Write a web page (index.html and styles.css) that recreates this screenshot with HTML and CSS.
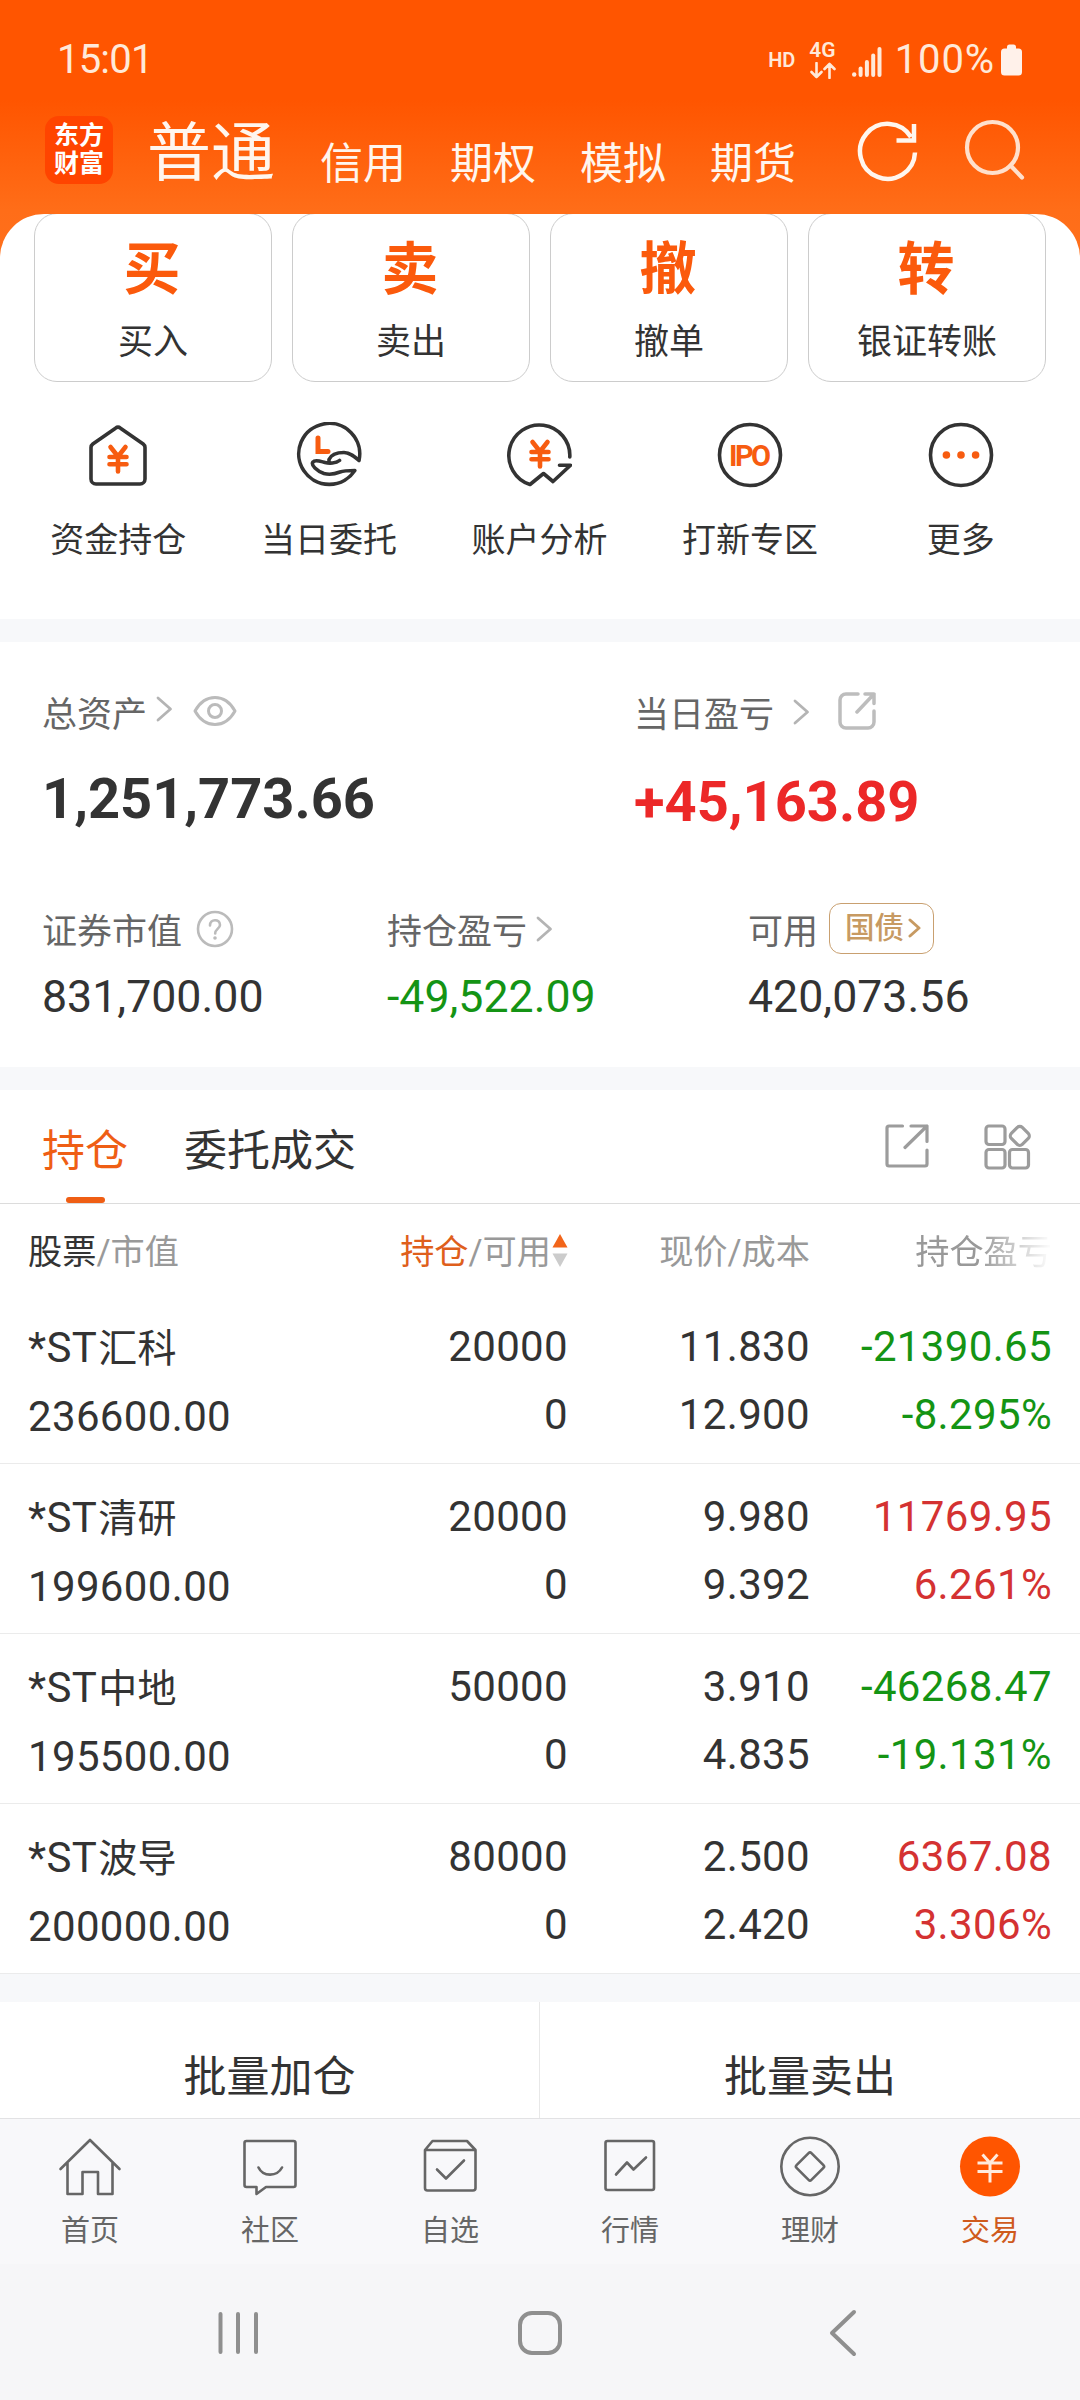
FILE: index.html
```html
<!DOCTYPE html>
<html lang="zh-CN">
<head>
<meta charset="utf-8">
<title>交易</title>
<link rel="stylesheet" href="styles.css">
</head>
<body>
<svg class="defs" width="0" height="0">
  <defs>
    <g id="yuan"><path d="M25.5 25L33 34.5L40.5 25M33 34.5V49.5M24.5 35H41.5M24.5 42.3H41.5"/></g>
  </defs>
</svg>
<div class="screen">
  <header class="top">
    <div class="status">
      <span class="clock">15:01</span>
      <div class="status-right">
        <span class="hd">HD</span>
        <div class="net">
          <span class="net-label">4G</span>
          <svg width="26" height="17" viewBox="0 0 26 17"><path d="M6.5 1V15M1.5 10L6.5 15L11.5 10M19.5 16V2M14.5 7L19.5 2L24.5 7"/></svg>
        </div>
        <svg class="signal" width="30" height="30" viewBox="0 0 30 30"><circle cx="2.2" cy="27.5" r="2.2"/><rect x="6.6" y="19.5" width="4" height="10.5" rx="2"/><rect x="12.9" y="13" width="4" height="17" rx="2"/><rect x="19.2" y="6.5" width="4" height="23.5" rx="2"/><rect x="25.5" y="0" width="4" height="30" rx="2"/></svg>
        <span class="percent">100%</span>
        <svg class="battery" width="21" height="32" viewBox="0 0 21 32"><path d="M6 3a2.5 2.5 0 0 1 2.5-2.5h4A2.5 2.5 0 0 1 15 3V4.500h2.500A3.500 3.500 0 0 1 21 8V28a3.500 3.500 0 0 1-3.500 3.500h-14A3.500 3.500 0 0 1 0 28V8A3.500 3.500 0 0 1 3.500 4.500H6z"/></svg>
      </div>
    </div>
    <nav class="nav">
      <div class="logo"><span>东方</span><span>财富</span></div>
      <div class="modes">
        <span class="mode mode-active">普通</span>
        <span class="mode">信用</span>
        <span class="mode">期权</span>
        <span class="mode">模拟</span>
        <span class="mode">期货</span>
      </div>
      <svg class="refresh" width="62" height="62" viewBox="0 0 62 62"><path d="M58 32.500A27.500 27.500 0 1 1 54 17M57 4V20.500H39.500"/></svg>
      <svg class="search" width="62" height="62" viewBox="0 0 62 62"><circle cx="28.500" cy="28.500" r="25.500"/><path d="M46.500 46.500L58 58.500"/></svg>
    </nav>
  </header>

  <main class="panel">
    <section class="cards">
      <div class="card"><b>买</b><span>买入</span></div>
      <div class="card"><b>卖</b><span>卖出</span></div>
      <div class="card"><b>撤</b><span>撤单</span></div>
      <div class="card"><b>转</b><span>银证转账</span></div>
    </section>

    <section class="shortcuts">
      <div class="shortcut">
        <svg width="66" height="66" viewBox="0 0 66 66"><path class="ink" d="M30.500 6.200Q33 4.200 35.500 6.200L58.200 22Q60 23.400 60 25.500V57a5 5 0 0 1-5 5H11a5 5 0 0 1-5-5V25.500Q6 23.400 7.800 22z"/><use class="accent" href="#yuan"/></svg>
        <span>资金持仓</span>
      </div>
      <div class="shortcut">
        <svg width="66" height="66" viewBox="0 0 66 66"><path class="ink" d="M63 38.500A30.500 30.500 0 1 0 58.800 48.500C52 48.500 48 48.500 44 50C39 52 34 53.200 28 51.500C21 49 14.500 43 17 40C19 37 25 39.500 29 40.500C33 41.500 40 41.500 43.500 38.500M33 40V37.500C35 33 41 30.500 48 30.500C54 30.500 58.500 34.500 63 38.500"/><path class="accent square" d="M22 16V29.500H32"/></svg>
        <span>当日委托</span>
      </div>
      <div class="shortcut">
        <svg width="66" height="66" viewBox="0 0 66 66"><path class="ink" d="M63.800 35A30.500 30.500 0 1 0 24 62.500L37.500 51.500L47 59.500L64.500 43.200H53.500"/><use class="accent" href="#yuan" x="1" y="-5"/></svg>
        <span>账户分析</span>
      </div>
      <div class="shortcut">
        <svg width="66" height="66" viewBox="0 0 66 66"><circle class="ink" cx="33" cy="33" r="30.500"/><text class="ipo" x="33" y="43.500" text-anchor="middle" textLength="42">IPO</text></svg>
        <span>打新专区</span>
      </div>
      <div class="shortcut">
        <svg width="66" height="66" viewBox="0 0 66 66"><circle class="ink" cx="33" cy="33" r="30.500"/><g class="dots"><circle cx="18.400" cy="33" r="3.800"/><circle cx="33" cy="33" r="3.800"/><circle cx="47.600" cy="33" r="3.800"/></g></svg>
        <span>更多</span>
      </div>
    </section>

    <div class="band"></div>

    <section class="assets">
      <div class="totals">
        <div class="total">
          <div class="label"><span>总资产</span>
            <svg class="chev chev-total" width="17" height="26" viewBox="0 0 17 26"><path d="M2 2L14.500 13L2 24"/></svg>
            <svg class="eye" width="44" height="32" viewBox="0 0 44 32"><path d="M2 16C12-2 32-2 42 16C32 34 12 34 2 16z"/><circle cx="22" cy="16" r="6.500"/></svg>
          </div>
          <div class="big">1,251,773.66</div>
        </div>
        <div class="total">
          <div class="label"><span>当日盈亏</span>
            <svg class="chev chev-day" width="17" height="26" viewBox="0 0 17 26"><path d="M2 2L14.500 13L2 24"/></svg>
            <svg class="share" width="38" height="38" viewBox="0 0 38 38"><path d="M20 2H8a6 6 0 0 0-6 6V30a6 6 0 0 0 6 6H30a6 6 0 0 0 6-6V19M27 2H36V11.500M36 2L19 20"/></svg>
          </div>
          <div class="big big-up">+45,163.89</div>
        </div>
      </div>
      <div class="details">
        <div class="detail">
          <div class="label"><span>证券市值</span>
            <svg class="help" width="38" height="38" viewBox="0 0 38 38"><circle cx="19" cy="19" r="17"/><path d="M14 15.500C14 8.500 24 8.500 24 15C24 18.500 19.200 19 19.200 23.500"/><circle class="point" cx="19" cy="28" r="1.800"/></svg>
          </div>
          <div class="amount">831,700.00</div>
        </div>
        <div class="detail">
          <div class="label"><span>持仓盈亏</span>
            <svg class="chev chev-hold" width="17" height="26" viewBox="0 0 17 26"><path d="M2 2L14.500 13L2 24"/></svg>
          </div>
          <div class="amount down">-49,522.09</div>
        </div>
        <div class="detail">
          <div class="label"><span>可用</span>
            <div class="bond"><span>国债</span><svg width="13" height="20" viewBox="0 0 13 20"><path d="M2 2L11 10L2 18"/></svg></div>
          </div>
          <div class="amount">420,073.56</div>
        </div>
      </div>
    </section>

    <div class="band"></div>

    <section class="tabs">
      <span class="tab tab-active">持仓</span>
      <span class="tab">委托成交</span>
      <svg class="tool" width="44" height="44" viewBox="0 0 44 44"><path d="M17.500 2H4A2 2 0 0 0 2 4V40A2 2 0 0 0 4 42H40A2 2 0 0 0 42 40V26M26 2H42V17.500M42 2L20 23.500"/></svg>
      <svg class="tool tool-grid" width="48" height="46" viewBox="0 0 48 46"><rect x="2" y="2" width="19" height="18.500" rx="3"/><rect x="2" y="25.500" width="19" height="18.500" rx="3"/><rect x="25.500" y="25.500" width="19" height="18.500" rx="3"/><rect x="28" y="4.200" width="15.500" height="15.500" rx="3.500" transform="rotate(45 35.800 12)"/></svg>
    </section>

    <section class="holdings">
      <div class="thead">
        <div class="c1"><span class="dark">股票</span>/市值</div>
        <div class="c2"><span class="hot">持仓</span>/可用<svg width="16" height="33" viewBox="0 0 16 33"><path class="asc" d="M8 0L15.500 13.500H.5z"/><path class="desc" d="M8 33L15.500 19.500H.5z"/></svg></div>
        <div>现价/成本</div>
        <div class="fade">持仓盈亏</div>
      </div>
      <div class="row">
        <div class="c1"><p>*ST<span>汇科</span></p><p>236600.00</p></div>
        <div><p>20000</p><p>0</p></div>
        <div><p>11.830</p><p>12.900</p></div>
        <div class="down"><p>-21390.65</p><p>-8.295%</p></div>
      </div>
      <div class="row">
        <div class="c1"><p>*ST<span>清研</span></p><p>199600.00</p></div>
        <div><p>20000</p><p>0</p></div>
        <div><p>9.980</p><p>9.392</p></div>
        <div class="up"><p>11769.95</p><p>6.261%</p></div>
      </div>
      <div class="row">
        <div class="c1"><p>*ST<span>中地</span></p><p>195500.00</p></div>
        <div><p>50000</p><p>0</p></div>
        <div><p>3.910</p><p>4.835</p></div>
        <div class="down"><p>-46268.47</p><p>-19.131%</p></div>
      </div>
      <div class="row">
        <div class="c1"><p>*ST<span>波导</span></p><p>200000.00</p></div>
        <div><p>80000</p><p>0</p></div>
        <div><p>2.500</p><p>2.420</p></div>
        <div class="up"><p>6367.08</p><p>3.306%</p></div>
      </div>
    </section>

    <section class="batch">
      <span>批量加仓</span>
      <span>批量卖出</span>
    </section>
  </main>

  <footer class="tabbar">
    <div class="item">
      <svg width="66" height="66" viewBox="0 0 66 66"><path d="M3.500 35L33 6L62.500 35M10.500 29V60H25.500V38H41V60H55.500V29"/></svg>
      <span>首页</span>
    </div>
    <div class="item">
      <svg width="66" height="66" viewBox="0 0 66 66"><path d="M9.500 7H56.500A2 2 0 0 1 58.500 9V51A2 2 0 0 1 56.500 53H29L19.500 60V53H9.500A2 2 0 0 1 7.500 51V9A2 2 0 0 1 9.500 7zM21.500 33.500C26 43 40 43 45 33.500"/></svg>
      <span>社区</span>
    </div>
    <div class="item">
      <svg width="66" height="66" viewBox="0 0 66 66"><path d="M8 16L15.500 7H50L58.500 16V54A2.500 2.500 0 0 1 56 56.500H10.500A2.500 2.500 0 0 1 8 54zM8 16H58.500M20 35.500L29 44.500L47 26.500"/></svg>
      <span>自选</span>
    </div>
    <div class="item">
      <svg width="66" height="66" viewBox="0 0 66 66"><rect x="8.500" y="7" width="48.500" height="49" rx="2"/><path d="M19 40.500L30 28.500L36.500 35.500L49 23.500"/></svg>
      <span>行情</span>
    </div>
    <div class="item">
      <svg width="66" height="66" viewBox="0 0 66 66"><circle cx="33" cy="32.500" r="28.700"/><rect x="22.500" y="22" width="21" height="21" rx="2" transform="rotate(45 33 32.500)"/></svg>
      <span>理财</span>
    </div>
    <div class="item item-active">
      <svg width="66" height="66" viewBox="0 0 66 66"><circle cx="33" cy="32.500" r="30"/><path d="M25.500 20.500L33 29L40.500 20.500M33 29V48.500M20.500 29H45.500M20.500 37.500H45.500"/></svg>
      <span>交易</span>
    </div>
  </footer>

  <div class="sysnav">
    <svg width="60" height="60" viewBox="0 0 60 60"><path d="M12.500 11V49M30 11V49M48 11V49"/></svg>
    <svg width="60" height="60" viewBox="0 0 60 60"><rect x="10" y="10" width="40" height="40" rx="12"/></svg>
    <svg width="60" height="60" viewBox="0 0 60 60"><path d="M42 9L20 30L42 51"/></svg>
  </div>
</div>
</body>
</html>
```

FILE: styles.css
```css
* {
  box-sizing: border-box;
}

body,
p {
  margin: 0;
}

body {
  width: 1080px;
  height: 2400px;
  overflow: hidden;
  font-family: Roboto, "Noto Sans CJK SC", sans-serif;
  color: #333;
}

svg {
  display: block;
  flex: none;
  fill: none;
  stroke-linecap: round;
  stroke-linejoin: round;
}

.defs {
  position: absolute;
}

.screen {
  display: flex;
  flex-direction: column;
  height: 2400px;
  background: linear-gradient(#ff5500 0, #ff5500 100px, #ff6d18 210px, #ff701c 260px);
}

/* Status bar and mode navigation */
.top {
  height: 214px;
  color: #fff6ee;
}

.status {
  display: flex;
  justify-content: space-between;
  height: 102px;
  padding: 18px 58px 0 57px;
}

.clock,
.percent {
  font-size: 40px;
  line-height: 84px;
  letter-spacing: -0.8px;
  color: #ffe9d9;
}

.status-right {
  display: flex;
  align-items: center;
  height: 84px;
}

.hd {
  font-size: 20px;
  font-weight: 600;
  margin-right: 14px;
  color: #ffe9d9;
}

.net {
  display: flex;
  flex-direction: column;
  align-items: center;
  gap: 2px;
  margin-right: 16px;
}

.net-label {
  font-size: 21px;
  line-height: 19px;
  font-weight: 600;
  color: #ffe9d9;
}

.net svg {
  stroke: #ffe9d9;
  stroke-width: 2.6;
}

.signal {
  fill: #ffe9d9;
  margin: 3px 13px 0 0;
}

.percent {
  letter-spacing: 0.9px;
}

.battery {
  fill: #fff1ea;
  margin-left: 6px;
}

.nav {
  display: flex;
  height: 112px;
  padding-left: 45px;
}

.logo {
  display: flex;
  flex-direction: column;
  align-items: center;
  width: 68px;
  height: 68px;
  margin-top: 14px;
  padding-top: 6px;
  border-radius: 14px;
  background: #ff4400;
  color: #fff;
  font-size: 25px;
  font-weight: 700;
  line-height: 28px;
}

.modes {
  display: flex;
  align-items: flex-start;
  gap: 44px;
  width: 683px;
  margin-left: 34px;
}

.mode {
  margin-top: 32px;
  font-size: 43px;
  line-height: 60px;
  white-space: nowrap;
}

.mode-active {
  margin: 0 1px 0 0;
  font-size: 64px;
  line-height: 104px;
}

.refresh {
  margin: 18px 0 0 27px;
  stroke: #fff6ee;
  stroke-width: 4.5;
  stroke-linecap: butt;
  stroke-linejoin: miter;
}

.search {
  margin: 17px 0 0 45px;
  stroke: #ffe0cc;
  stroke-width: 4.2;
}

/* White content sheet */
.panel {
  height: 1904px;
  overflow: hidden;
  border-radius: 44px 44px 0 0;
  background: #fff;
}

.cards {
  display: grid;
  grid-template-columns: repeat(4, 1fr);
  gap: 20px;
  height: 169px;
  margin-top: -1px;
  padding: 0 34px;
}

.card {
  display: flex;
  flex-direction: column;
  align-items: center;
  border: 1px solid #ccc;
  border-radius: 23px;
}

.card b {
  margin: 16px 2px 0 0;
  font-size: 57px;
  font-weight: 700;
  line-height: 80px;
  color: #fb5a0c;
}

.card span {
  margin-top: 3px;
  font-size: 35px;
  line-height: 60px;
}

.shortcuts {
  display: grid;
  grid-template-columns: repeat(5, 1fr);
  height: 237px;
  padding: 40px 14px 0 13px;
}

.shortcut {
  display: flex;
  flex-direction: column;
  align-items: center;
}

.shortcut span {
  margin-top: 22px;
  font-size: 34px;
  line-height: 60px;
}

.ink {
  stroke: #333;
  stroke-width: 3.6;
}

.accent {
  stroke: #f75c10;
  stroke-width: 4.6;
}

.square {
  stroke-width: 5;
  stroke-linejoin: miter;
}

.ipo {
  fill: #f75c10;
  font-size: 29px;
  font-weight: 700;
}

.dots {
  fill: #f75c10;
}

.band {
  height: 23px;
  background: #f7f8fa;
}

/* Account summary */
.assets {
  height: 425px;
}

.totals {
  display: grid;
  grid-template-columns: 592px 1fr;
  padding: 44px 0 0 42px;
}

.label {
  display: flex;
  align-items: center;
  height: 60px;
  font-size: 35px;
  line-height: 60px;
  color: #666;
}

.chev {
  stroke: #b4b4b4;
  stroke-width: 2.8;
}

.chev-total {
  margin: -14px 0 0 9px;
}

.eye {
  margin: -10px 0 0 20px;
  stroke: #bbb;
  stroke-width: 3;
}

.chev-day {
  margin: -9px 0 0 19px;
}

.share {
  margin: -11px 0 0 28px;
  stroke: #bdbdbd;
  stroke-width: 3.5;
}

.chev-hold {
  margin: -8px 0 0 9px;
}

.big {
  margin-top: 13px;
  font-size: 56px;
  font-weight: 700;
  line-height: 80px;
}

.big-up {
  margin: 16px 0 -3px;
  color: #ec2828;
}

.details {
  display: grid;
  grid-template-columns: 345px 361px 1fr;
  padding: 64px 0 0 42px;
}

.help {
  margin: -9px 0 0 14px;
  stroke: #bbb;
  stroke-width: 2.6;
}

.point {
  fill: #bbb;
  stroke: none;
}

.amount {
  margin-top: 2px;
  font-size: 44.7px;
  line-height: 64px;
}

.bond {
  display: flex;
  align-items: center;
  gap: 4px;
  width: 105px;
  height: 51px;
  margin: -10px 0 0 11px;
  padding-left: 15px;
  border: 1.5px solid #c9a070;
  border-radius: 12px;
  font-size: 29.5px;
  font-weight: 500;
  line-height: 48px;
  color: #c79a62;
}

.bond svg {
  stroke: #c79a62;
  stroke-width: 3;
}

/* Holdings */
.tabs {
  display: flex;
  height: 114px;
  padding-left: 42px;
  border-bottom: 1px solid #dcdcdc;
}

.tab {
  font-size: 43px;
  line-height: 123px;
}

.tab + .tab {
  margin-left: 56px;
}

.tab-active {
  position: relative;
  color: #ef5e14;
}

.tab-active::after {
  content: "";
  position: absolute;
  left: 24px;
  top: 107px;
  width: 39px;
  height: 6px;
  border-radius: 3px;
  background: #ef5e14;
}

.tool {
  margin: 34px 0 0 auto;
  stroke: #9c9c9c;
  stroke-width: 3.2;
}

.tool-grid {
  margin: 34px 48px 0 55px;
}

.thead,
.row {
  display: grid;
  grid-template-columns: 302px 238px 242px 242px;
  padding: 0 28px;
  text-align: right;
}

.thead {
  height: 90px;
  font-size: 34.2px;
  line-height: 96px;
  color: #999;
}

.thead .c1,
.row .c1 {
  text-align: left;
}

.dark {
  color: #333;
}

.hot {
  color: #df5f1c;
}

.thead .c2 {
  display: flex;
  justify-content: flex-end;
}

.thead svg {
  margin: 30px 0 0 1px;
}

.asc {
  fill: #f2651a;
}

.desc {
  fill: #ccc;
}

.fade {
  -webkit-mask-image: linear-gradient(90deg, #000 70%, transparent 100%);
  mask-image: linear-gradient(90deg, #000 70%, transparent 100%);
}

.row {
  height: 170px;
  padding-top: 19px;
  border-bottom: 1px solid #ebebeb;
  font-size: 42px;
  line-height: 68px;
  letter-spacing: 0.35px;
}

.row .c1 {
  padding-top: 1px;
}

.row .c1 span {
  margin-left: 1px;
  font-size: 39px;
}

.up {
  color: #d43232;
}

.down {
  color: #149414;
}

.batch {
  display: grid;
  grid-template-columns: 1fr 1fr;
  height: 144px;
  border-top: 28px solid #f7f8fa;
  font-size: 43px;
  line-height: 151px;
  text-align: center;
}

.batch span:first-child {
  border-right: 1px solid #e8e8e8;
}

/* App tab bar */
.tabbar {
  display: grid;
  grid-template-columns: repeat(6, 1fr);
  height: 146px;
  border-top: 1px solid #e2e2e4;
  background: #f8f8fa;
}

.item {
  display: flex;
  flex-direction: column;
  align-items: center;
  padding-top: 15px;
  color: #666;
}

.item svg {
  margin-right: 1px;
  stroke: #666;
  stroke-width: 2.6;
}

.item span {
  margin-top: 11px;
  font-size: 29px;
  line-height: 40px;
}

.item-active {
  color: #cf5a1c;
}

.item-active circle {
  fill: #ff5500;
  stroke: none;
}

.item-active path {
  stroke: #ffeadc;
  stroke-width: 3;
  stroke-linecap: butt;
}

/* System navigation */
.sysnav {
  display: flex;
  justify-content: center;
  gap: 242px;
  height: 136px;
  padding-top: 39px;
  background: #f6f6f8;
}

.sysnav svg {
  stroke: #8f8f8f;
  stroke-width: 4;
}
```
